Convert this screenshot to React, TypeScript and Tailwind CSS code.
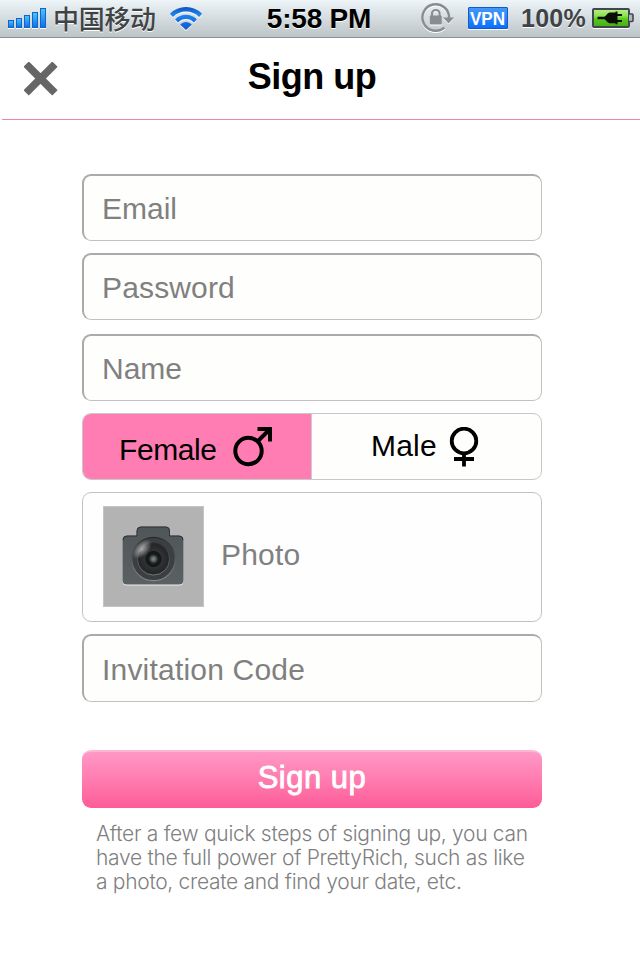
import React from "react";

const sans = "font-['Liberation_Sans',Arial,sans-serif]";

function SignalBars() {
  return (
    <svg className="ml-2 h-[22px] w-[39px]" viewBox="0 0 39 22">
      <defs>
        <linearGradient id="bar" x1="0" y1="0" x2="0" y2="1">
          <stop offset="0" stopColor="#4cc4fb" />
          <stop offset="1" stopColor="#0872ee" />
        </linearGradient>
      </defs>
      {[
        [0, 13],
        [8, 11],
        [16, 8],
        [24, 5],
        [32, 1],
      ].map(([x, y]) => (
        <g key={x}>
          <rect x={x} y={y + 1} width="6" height={21 - y} fill="#fff" />
          <rect x={x + 0.5} y={y + 0.5} width="5" height={20 - y} fill="url(#bar)" stroke="#1264c8" />
        </g>
      ))}
    </svg>
  );
}

function Wifi() {
  return (
    <svg className="ml-[14px] h-[25px] w-8" viewBox="0 0 32 25">
      <defs>
        <linearGradient id="wifi" x1="0" y1="0" x2="0" y2="25" gradientUnits="userSpaceOnUse">
          <stop offset="0" stopColor="#1450b8" />
          <stop offset=".3" stopColor="#1b86f0" />
          <stop offset="1" stopColor="#1450c8" />
        </linearGradient>
      </defs>
      {["#fff", "url(#wifi)"].map((c, i) => (
        <g key={c} transform={`translate(0 ${1 - i})`} fill="none" stroke={c}>
          <path d="M1.4 8.4C9.6 0.2 22.4 0.2 30.6 8.4" strokeWidth="4.4" />
          <path d="M6.6 14C12 8.6 20 8.600 25.400 14" strokeWidth="4.200" />
          <path d="M16 23L10.200 17.800C13.500 14.200 18.500 14.200 21.800 17.800Z" fill={c} stroke="none" />
        </g>
      ))}
    </svg>
  );
}

function RotationLock() {
  return (
    <svg className="h-8 w-[34px]" viewBox="0 0 34 32">
      {["#fff", "#868e91"].map((c, i) => (
        <g key={c} transform={`translate(0 ${1 - i})`}>
          <path d="M24.4 25.6A13.3 13.3 0 1 1 29 16" fill="none" stroke={c} strokeWidth="2.5" />
          <path d="M23 15.5H34.2L28.5 21.5Z" fill={c} />
          <rect x="9.8" y="13.5" width="12" height="9" rx="1" fill={c} />
          <path d="M12 14V11.8A3.8 3.8 0 0 1 19.600 11.800V14" fill="none" stroke={c} strokeWidth="2.2" />
        </g>
      ))}
    </svg>
  );
}

function Battery() {
  return (
    <svg className="ml-[6px] h-[22px] w-[43px]" viewBox="0 0 43 22">
      <defs>
        <linearGradient id="battery" x1="0" y1="0" x2="0" y2="1">
          <stop offset="0" stopColor="#b9f28b" />
          <stop offset=".4" stopColor="#8ae04a" />
          <stop offset=".55" stopColor="#5ac81e" />
          <stop offset="1" stopColor="#45ad13" />
        </linearGradient>
      </defs>
      <rect x="1" y="3" width="36" height="18" rx="1" fill="none" stroke="#fff" strokeWidth="2" />
      <rect x="1" y="2" width="36" height="18" rx="1" fill="url(#battery)" stroke="#41474f" strokeWidth="2" />
      <path d="M37 7H40Q41 7 41 8V13.5Q41 14.5 40 14.5H37" fill="#aeb6bb" stroke="#41474f" strokeWidth="1.6" />
      <path
        d="M5.500 9.700H12C14.500 9.200 14.500 6.500 17.500 5.500H23.500V4.500H25.500V7H30V9H25.500V13H30V15H25.500V17.300H23.500V16.300H17.500C14.500 15.500 14.500 12.800 12 12.300H5.500Z"
        fill="#0a0d08"
      />
    </svg>
  );
}

function StatusBar() {
  return (
    <header className="flex h-[38px] items-start border-b border-[#8b9297] bg-gradient-to-b from-[#edf5f8] to-[#bdc4c7]">
      <div className="flex w-[240px] shrink-0 pt-[7px]">
        <SignalBars />
        <span className="ml-[6px] whitespace-nowrap font-['Noto_Sans_CJK_SC',sans-serif] text-[26px] font-medium leading-[22px] tracking-[-0.3px] text-[#404345] [text-shadow:0_1px_0_#fff]">
          中国移动
        </span>
        <Wifi />
      </div>
      <time className="w-[158px] whitespace-nowrap pt-[3px] text-center text-[28px] font-bold leading-[31px] tracking-[-0.2px] text-black [text-shadow:0_1px_0_#fff]">
        5:58 PM
      </time>
      <div className="ml-[22px] flex pt-[2px]">
        <RotationLock />
        <span className="ml-[14px] mt-[5px] flex h-[22px] w-10 items-center justify-center rounded-[1px] border border-[#1459c8] bg-gradient-to-b from-[#4398fa] to-[#0870fb] text-[19px] font-bold leading-none text-white shadow-[0_1px_0_#fff]">
          <span className="scale-x-[0.9]">VPN</span>
        </span>
        <span className="ml-[13px] w-[65px] whitespace-nowrap pt-[1px] text-[25px] font-bold leading-[31px] tracking-[0.25px] text-[#404345] [text-shadow:0_1px_0_#fff]">
          100%
        </span>
        <div className="pt-[5px]">
          <Battery />
        </div>
      </div>
    </header>
  );
}

function Field({ label, className = "h-[67px]" }: { label: string; className?: string }) {
  return (
    <div
      className={`flex items-center rounded-[9px] border-b border-l-2 border-r border-t-2 border-b-[#c2c2c2] border-l-[#aaa] border-r-[#c2c2c2] border-t-[#aaa] bg-[#fefefc] pl-[18px] text-[30px] leading-[34px] text-[#808080] ${className}`}
    >
      {label}
    </div>
  );
}

function Camera() {
  return (
    <svg className="-ml-px -mt-px h-[100px] w-[100px]" viewBox="0 0 100 100">
      <defs>
        <linearGradient id="camera-body" x1="0" y1="0" x2="0" y2="1">
          <stop offset="0" stopColor="#505558" />
          <stop offset="1" stopColor="#5b6063" />
        </linearGradient>
        <linearGradient id="rim" x1="0" y1="0" x2="0" y2="1">
          <stop offset="0" stopColor="#292b2c" />
          <stop offset="1" stopColor="#85898b" />
        </linearGradient>
        <radialGradient id="glass">
          <stop offset="0" stopColor="#839190" />
          <stop offset=".15" stopColor="#566060" />
          <stop offset=".3" stopColor="#191b1c" />
          <stop offset=".48" stopColor="#151617" />
          <stop offset=".52" stopColor="#303234" />
          <stop offset="1" stopColor="#222426" />
        </radialGradient>
        <radialGradient id="shine">
          <stop offset="0" stopColor="#fff" stopOpacity=".6" />
          <stop offset="1" stopColor="#fff" stopOpacity="0" />
        </radialGradient>
      </defs>
      <path
        d="M24 29.5H33.5V25Q33.5 20.5 38 20.5H63Q67 20.5 67 25V29.5H76Q80.5 29.5 80.5 34V75Q80.5 79.500 76 79.500H24Q19.500 79.500 19.500 75V34Q19.500 29.500 24 29.500Z"
        fill="#eee"
      />
      <path
        d="M24 29.5H33.5V25Q33.5 20.5 38 20.5H63Q67 20.5 67 25V29.5H76Q80.5 29.5 80.5 34V74Q80.5 78.500 76 78.500H24Q19.500 78.500 19.500 74V34Q19.500 29.500 24 29.500Z"
        fill="url(#camera-body)"
      />
      <path
        d="M20 34Q20 30 24 30H34V25Q34 21 38 21H63Q66.5 21 66.500 25V30H76Q80 30 80 34"
        fill="none"
        stroke="#303335"
      />
      <circle cx="50.500" cy="53" r="21.700" fill="#3c3f41" stroke="url(#rim)" strokeWidth="1.200" />
      <circle cx="50.500" cy="53" r="16" fill="url(#glass)" stroke="url(#rim)" strokeWidth="0.800" />
      <ellipse cx="39" cy="43" rx="12" ry="7" transform="rotate(-45 39 43)" fill="url(#shine)" />
    </svg>
  );
}

export default function App() {
  return (
    <main className={`h-[960px] w-[640px] overflow-hidden bg-white ${sans}`}>
      <StatusBar />
      <nav className="ml-0.5 grid h-[82px] grid-cols-[60px_1fr_78px] border-b border-[#f284b2]">
        <svg className="ml-[22px] mt-[24px] h-[34px] w-[34px]" viewBox="0 0 34 34">
          <path d="M4 4L29 29M29 4L4 29" stroke="#666" strokeWidth="8" strokeLinecap="square" strokeLinejoin="round" className="scale-[0.94] origin-center" />
        </svg>
        <h1 className="pt-[18px] text-center text-[36px] font-bold leading-[42px] tracking-[-0.5px] text-black">Sign up</h1>
      </nav>
      <form className="ml-[82px] mt-[54px] w-[460px]">
        <Field label="Email" className="h-[67px] pt-px" />
        <Field label="Password" className="mt-3 h-[67px] pt-px tracking-[0.15px]" />
        <Field label="Name" className="mt-[14px] h-[67px] pt-px" />
        <div className="mt-3 flex h-[67px] overflow-hidden rounded-[9px] border border-[#c8c8c8] bg-[#fefefc] text-[30px] leading-[34px] text-black">
          <div className="flex w-[229px] border-r border-[#ccc] bg-[#ff7db3] pl-9">
            <span className="mt-[19px] w-[98px] whitespace-nowrap tracking-[-0.4px]">Female</span>
            <svg className="ml-[15px] mt-3 h-[42px] w-[42px]" viewBox="0 0 42 42" fill="none" stroke="#000" strokeWidth="4">
              <circle cx="16.500" cy="25" r="13.200" />
              <path d="M25.500 15.500L37 4M25.500 3H38V15.500" />
            </svg>
          </div>
          <div className="flex flex-1 pl-[59px]">
            <span className="mt-[15px] w-[66px] whitespace-nowrap tracking-[0.2px]">Male</span>
            <svg className="ml-3 mt-[13px] h-10 w-[30px]" viewBox="0 0 30 40" fill="none" stroke="#000" strokeWidth="3.800">
              <circle cx="15" cy="14" r="12.300" />
              <path d="M15 26V39.500M5 32H25" />
            </svg>
          </div>
        </div>
        <div className="mt-3 flex h-[130px] items-start rounded-[9px] border border-[#c2c2c2] bg-[#fefefe] pl-5 pt-[13px]">
          <div className="h-[101px] w-[101px] border border-[#c4c4c4] bg-[#b3b3b3]">
            <Camera />
          </div>
          <span className="ml-[17px] mt-[32px] text-[30px] leading-[34px] tracking-[0.2px] text-[#808080]">Photo</span>
        </div>
        <Field label="Invitation Code" className="mt-3 h-[68px] pt-[2px] tracking-[0.2px]" />
        <button
          type="button"
          className="mt-[48px] block h-[58px] w-full rounded-[9px] border-t-2 border-[#ffb6d5] bg-gradient-to-b from-[#ff98c6] to-[#fd5b98] pb-[4px] text-[31px] leading-[34px] tracking-[0.5px] text-white [-webkit-text-stroke:0.8px_white]"
        >
          Sign up
        </button>
        <p className="ml-[14px] mt-[14px] whitespace-nowrap font-['Inter','Liberation_Sans',sans-serif] text-[21px] font-light leading-6 tracking-[-0.3px] text-[#808080]">
          After a few quick steps of signing up, you can
          <br />
          have the full power of PrettyRich, such as like
          <br />a photo, create and find your date, etc.
        </p>
      </form>
    </main>
  );
}
